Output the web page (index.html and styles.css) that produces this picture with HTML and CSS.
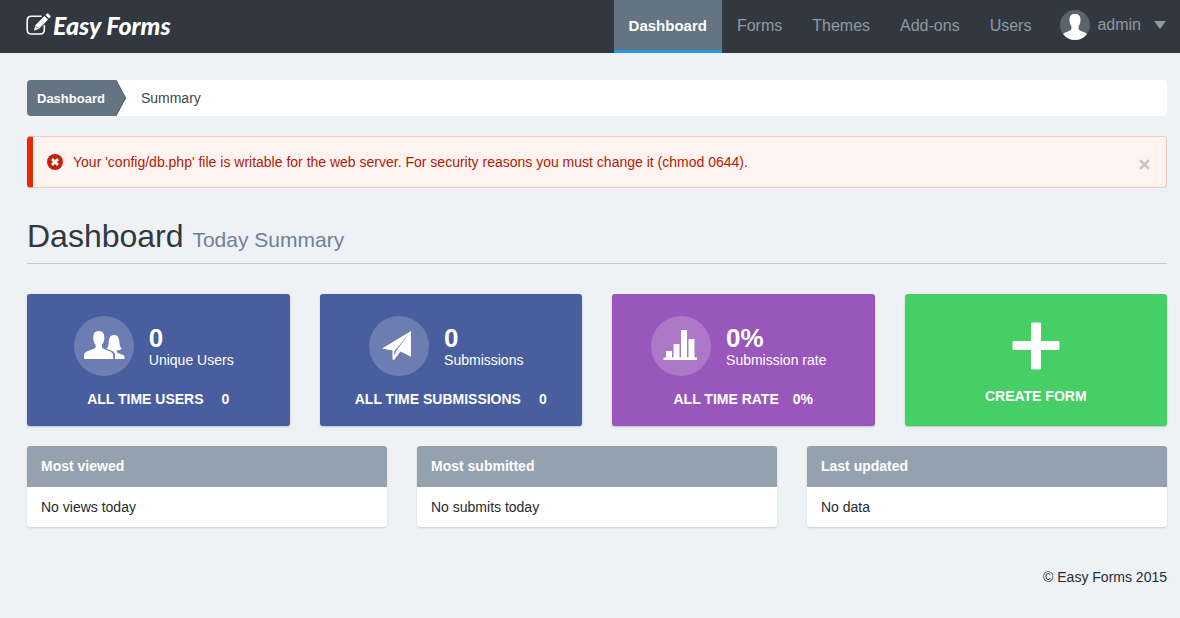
FILE: index.html
```html
<!DOCTYPE html>
<html lang="en">
<head>
<meta charset="utf-8">
<title>Dashboard - Easy Forms</title>
<meta name="viewport" content="width=device-width, initial-scale=1">
<link rel="stylesheet" href="styles.css">
</head>
<body>
<header class="navbar">
  <a class="brand" href="#">
    <svg class="brand-icon" viewBox="0 0 25 23" aria-hidden="true">
      <path d="M15 3.200H5.500Q1.200 3.200 1.200 7.500V16.700Q1.200 21 5.500 21H14Q18.300 21 18.300 16.700V12.500" fill="none" stroke="#fff" stroke-width="1.600" stroke-linecap="round"/>
      <path d="M8 17.500L9.300 12.300 18.500 3.100 22 6.600 12.800 16ZM19.500 2.100L21 .600Q21.600 0 22.300.600L24.400 2.700Q25 3.400 24.400 4.100L23 5.600Z" fill="#fff"/>
      <path d="M9.700 13.200L12 15.500" stroke="#313840" stroke-width="1"/>
    </svg>
    <span>Easy Forms</span>
  </a>
  <nav class="menu">
    <a class="menu-link active" href="#">Dashboard</a>
    <a class="menu-link" href="#">Forms</a>
    <a class="menu-link" href="#">Themes</a>
    <a class="menu-link" href="#">Add-ons</a>
    <a class="menu-link" href="#">Users</a>
    <button class="user" type="button">
      <svg class="avatar" viewBox="0 0 30 30" aria-hidden="true">
        <circle cx="15" cy="15" r="15" fill="#5b636b"/>
        <path d="M15 4C18.800 4 20.500 6 20.500 9.500 20.500 12 20 14.500 18.600 16.200V19.200C19.500 21 24.500 21.500 27 24A15 15 0 0 1 3 24C5.500 21.500 10.500 21 11.400 19.200V16.200C10 14.500 9.500 12 9.500 9.500 9.500 6 11.200 4 15 4Z" fill="#fff"/>
      </svg>
      <span>admin</span>
      <svg class="caret" viewBox="0 0 12 8" aria-hidden="true"><path d="M0 0H12L6 8Z" fill="#8f98a3"/></svg>
    </button>
  </nav>
</header>

<main class="page">
  <nav class="breadcrumb" aria-label="Breadcrumb">
    <a class="crumb" href="#">Dashboard</a>
    <svg class="crumb-arrow" viewBox="0 0 10 36" aria-hidden="true"><path d="M0 0L10 18 0 36Z" fill="#647483"/><path d="M0 0L9.500 18 0 36" fill="none" stroke="#4f5d6a"/></svg>
    <span class="crumb-current">Summary</span>
  </nav>

  <div class="alert" role="alert">
    <svg class="alert-icon" viewBox="0 0 16 16" aria-hidden="true"><circle cx="8" cy="8" r="8" fill="#c32106"/><path d="M5 5L11 11M11 5L5 11" stroke="#fff" stroke-width="2.800"/></svg>
    <p class="alert-text">Your 'config/db.php' file is writable for the web server. For security reasons you must change it (chmod 0644).</p>
    <button class="close" type="button" aria-label="Close"><svg class="close-icon" viewBox="0 0 10 10" aria-hidden="true"><path d="M1 1L9 9M9 1L1 9" stroke="#c8c4c2" stroke-width="2.500"/></svg></button>
  </div>

  <h1 class="title">Dashboard <small>Today Summary</small></h1>

  <section class="stats">
    <article class="stat blue">
      <div class="stat-main">
        <span class="disc"><svg class="disc-icon" viewBox="0 0 60 60" aria-hidden="true">
          <path d="M24.800 15C28.800 15 30.300 17.800 30.300 21.500 30.300 24.500 29.600 27 28 28.800V31.500C29 34 39.200 34.500 39.200 39V43H10V39C10 34.500 20.500 34 21.600 31.500V28.800C20 27 19.300 24.500 19.300 21.500 19.300 17.800 20.800 15 24.800 15Z"/>
          <path d="M40 19C44.700 19 45.200 23 45.500 27 45.700 30 46.500 31.500 47.800 32.400 46.500 34 44.500 34.300 42.800 34.400V36C44 38 50.500 38.200 50.500 41V43H41V38.500C41 35.500 36.500 34.300 32.500 32.500 34 31.500 34.600 29.500 34.700 27 35 23 35.500 19 40 19Z"/>
        </svg></span>
        <p class="figure"><strong>0</strong><span>Unique Users</span></p>
      </div>
      <p class="total"><span>ALL TIME USERS</span><span>0</span></p>
    </article>
    <article class="stat blue">
      <div class="stat-main">
        <span class="disc"><svg class="disc-icon" viewBox="0 0 60 60" aria-hidden="true">
          <path d="M13 32.500L42 15V40.700L31.500 35.500 25 44 23.500 43.500V34.500ZM25.300 35.300V39.500L28 33.800 39.500 18.500Z" fill-rule="evenodd"/>
        </svg></span>
        <p class="figure"><strong>0</strong><span>Submissions</span></p>
      </div>
      <p class="total"><span>ALL TIME SUBMISSIONS</span><span>0</span></p>
    </article>
    <article class="stat purple">
      <div class="stat-main">
        <span class="disc"><svg class="disc-icon" viewBox="0 0 60 60" aria-hidden="true">
          <path d="M12.500 41.500H15V35H21V41.500H22.500V28H28.500V41.500H30V14H36V41.500H37.500V23H43.500V41.500H46V44H12.500Z"/>
        </svg></span>
        <p class="figure"><strong>0%</strong><span>Submission rate</span></p>
      </div>
      <p class="total"><span>ALL TIME RATE</span><span>0%</span></p>
    </article>
    <a class="stat green" href="#">
      <svg class="plus" viewBox="0 0 48 48" aria-hidden="true"><path d="M20 .500H28Q29 .500 29 1.500V19H46.500Q47.500 19 47.500 20V27Q47.500 28 46.500 28H29V46.500Q29 47.500 28 47.500H20Q19 47.500 19 46.500V28H1.500Q.500 28 .500 27V20Q.500 19 1.500 19H19V1.500Q19 .500 20 .500Z" fill="#fff"/></svg>
      <strong class="create">CREATE FORM</strong>
    </a>
  </section>

  <section class="panels">
    <article class="panel"><h2 class="panel-head">Most viewed</h2><p class="panel-body">No views today</p></article>
    <article class="panel"><h2 class="panel-head">Most submitted</h2><p class="panel-body">No submits today</p></article>
    <article class="panel"><h2 class="panel-head">Last updated</h2><p class="panel-body">No data</p></article>
  </section>

  <footer class="footer">© Easy Forms 2015</footer>
</main>
</body>
</html>
```
FILE: styles.css
```css
* { box-sizing: border-box; }
body {
  margin: 0;
  background: #eef2f5;
  color: #262b30;
  font: 14px/20px "Liberation Sans", Arial, sans-serif;
}
h1, h2, p { margin: 0; }
a { color: inherit; text-decoration: none; }
button { border: 0; padding: 0; background: none; color: inherit; font: inherit; cursor: pointer; }
svg { display: block; flex: none; }

.navbar {
  display: flex;
  justify-content: space-between;
  min-height: 53px;
  padding: 0 14px 0 26px;
  background: #313840;
}
.brand {
  display: flex;
  align-items: center;
  gap: 2px;
  padding-bottom: 4px;
  color: #fff;
  font: italic 900 25px/48px Lato, sans-serif;
}
.brand-icon { width: 25px; height: 23px; }
.menu { display: flex; color: #8f98a3; font-size: 16px; }
.menu-link { padding: 16px 15px 14px; border-bottom: 3px solid transparent; }
.menu-link.active {
  background: #647483;
  border-color: #1c9be4;
  color: #fff;
  font-size: 15px;
  font-weight: bold;
}
.user { display: flex; align-items: center; gap: 7px; margin-left: 14px; padding-bottom: 3px; }
.avatar { width: 30px; height: 30px; }
.caret { width: 12px; height: 8px; margin-left: 6px; }

.page { padding: 27px 13px 30px 27px; }
.breadcrumb {
  display: flex;
  height: 36px;
  margin-bottom: 20px;
  overflow: hidden;
  border-radius: 4px;
  background: #fff;
  line-height: 36px;
}
.crumb { padding: 1px 11px 0 10px; background: #647483; color: #fff; font-size: 13px; font-weight: bold; }
.crumb-arrow { width: 10px; height: 36px; }
.crumb-current { padding-left: 15px; color: #40464c; }

.alert {
  display: flex;
  align-items: center;
  padding: 15px 16px 15px 14px;
  border: 1px solid #fbc5b9;
  border-left: 6px solid #ea2803;
  border-radius: 4px;
  background: #fdf3f1;
  color: #b31b04;
}
.alert-icon { width: 16px; height: 16px; margin-right: 10px; }
.alert-text { flex: 1; }
.close { padding-top: 4px; }
.close-icon { width: 11px; height: 11px; }

.title {
  margin: 30px 0;
  padding-bottom: 9px;
  border-bottom: 1px solid #c3cad0;
  color: #313840;
  font-size: 32px;
  font-weight: normal;
  line-height: 36px;
}
.title small { color: #6f8195; font-size: 21px; line-height: 20px; }

.stats { display: grid; grid-template-columns: repeat(4, 1fr); gap: 30px; margin-bottom: 20px; }
.stat {
  display: flex;
  flex-direction: column;
  align-items: center;
  min-height: 132px;
  padding-top: 22px;
  border-radius: 3px;
  box-shadow: 0 1px 2px #b6c0ca;
  color: #fff;
}
.blue { background: #485e9e; }
.purple { background: #9957bb; }
.green { padding-top: 28px; background: #45cf64; }
.stat-main { display: flex; align-items: center; gap: 15px; padding-right: 9px; }
.disc { border-radius: 50%; background: rgba(255, 255, 255, 0.2); }
.disc-icon { width: 60px; height: 60px; fill: #fff; }
.figure { display: flex; flex-direction: column; padding-top: 2px; line-height: 18px; }
.figure strong { font-size: 26px; line-height: 26px; }
.total { display: flex; gap: 18px; margin-top: 13px; font-weight: bold; }
.purple .total { gap: 14px; }
.plus { width: 48px; height: 48px; }
.create { margin-top: 16px; }

.panels { display: grid; grid-template-columns: repeat(3, 1fr); gap: 30px; }
.panel { overflow: hidden; border-radius: 3px; background: #fff; box-shadow: 0 1px 2px #c6d0d9; }
.panel-head { padding: 10px 14px 11px; background: #94a1ae; color: #fff; font-size: 14px; line-height: 20px; }
.panel-body { padding: 10px 14px; }
.footer { margin-top: 40px; text-align: right; }
```
